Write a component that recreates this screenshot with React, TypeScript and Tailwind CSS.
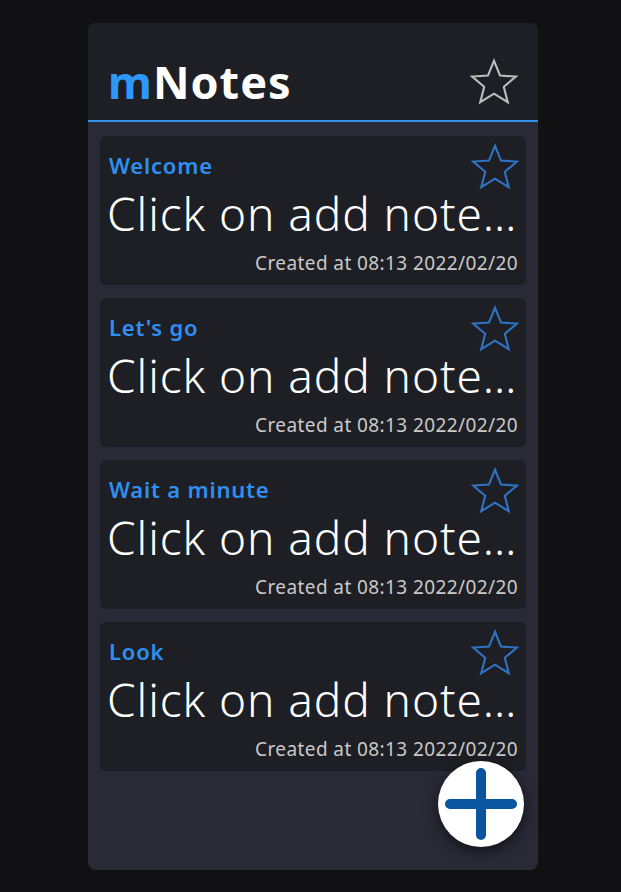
import React from 'react';

const notes = [
  { title: 'Welcome', body: 'Click on add note to create a new note', date: '08:13 2022/02/20' },
  { title: "Let's go", body: 'Click on add note to create a new note', date: '08:13 2022/02/20' },
  { title: 'Wait a minute', body: 'Click on add note to create a new note', date: '08:13 2022/02/20' },
  { title: 'Look', body: 'Click on add note to create a new note', date: '08:13 2022/02/20' },
];

function StarIcon({ className }: { className?: string }) {
  return (
    <svg viewBox="0 0 24 24" fill="none" strokeWidth={1} strokeLinejoin="miter" className={className}>
      <path d="M12 1.8l2.9 7.1 7.6.5-5.8 4.9 1.9 7.4L12 17.6l-6.6 4.1 1.9-7.4L1.5 9.4l7.6-.5z" />
    </svg>
  );
}

export default function App() {
  return (
    <div className="min-h-screen w-full bg-[#111113] pl-[88px] pt-[23px]" style={{ fontFamily: '"Noto Sans", "Open Sans", sans-serif' }}>
      <div className="relative w-[450px] h-[847px] bg-[#282a36] rounded-lg overflow-hidden">
        {/* header */}
        <div className="h-[99px] bg-[#1e1f24] border-b-2 border-[#2f8fe8] flex items-start justify-between pl-5 pr-[19px] pt-[34px]">
          <h1 className="text-[45px] font-bold leading-none mt-[2px] tracking-[1px]">
            <span className="text-[#2e98fa]">m</span>
            <span className="text-white">Notes</span>
          </h1>
          <StarIcon className="w-[50px] h-[50px] stroke-[#bdbdbd]" />
        </div>

        {/* notes */}
        <div className="flex flex-col gap-[13px] px-3 pt-[14px]">
          {notes.map((n, i) => (
            <div key={n.title + i} className="relative h-[149px] bg-[#1e1f24] rounded-md pl-[9px] pr-[8px] pt-[15px]">
              <StarIcon className="absolute top-[6px] right-[6px] w-[50px] h-[50px] stroke-[#2f74c4]" />
              <div className="text-[22px] font-semibold text-[#2e8ff2] leading-[28px] tracking-[0.8px]">{n.title}</div>
              <div className="text-[46px] font-light text-white leading-[58px] mt-[5px] tracking-[0.9px] whitespace-nowrap overflow-hidden text-ellipsis -ml-[2px]">
                {n.body}
              </div>
              <div className="text-right text-[19px] text-[#c9c9c9] leading-[26px] mt-[8px] tracking-[0.4px]">Created at {n.date}</div>
            </div>
          ))}
        </div>

        {/* add button */}
        <button className="absolute right-[14px] bottom-[23px] w-[86px] h-[86px] rounded-full bg-white flex items-center justify-center shadow-[0_4px_14px_rgba(0,0,0,0.6)]">
          <svg viewBox="0 0 86 86" className="w-[86px] h-[86px]">
            <path d="M43 12v62M12 43h62" stroke="#0a55a0" strokeWidth={10} strokeLinecap="round" />
          </svg>
        </button>
      </div>
    </div>
  );
}
